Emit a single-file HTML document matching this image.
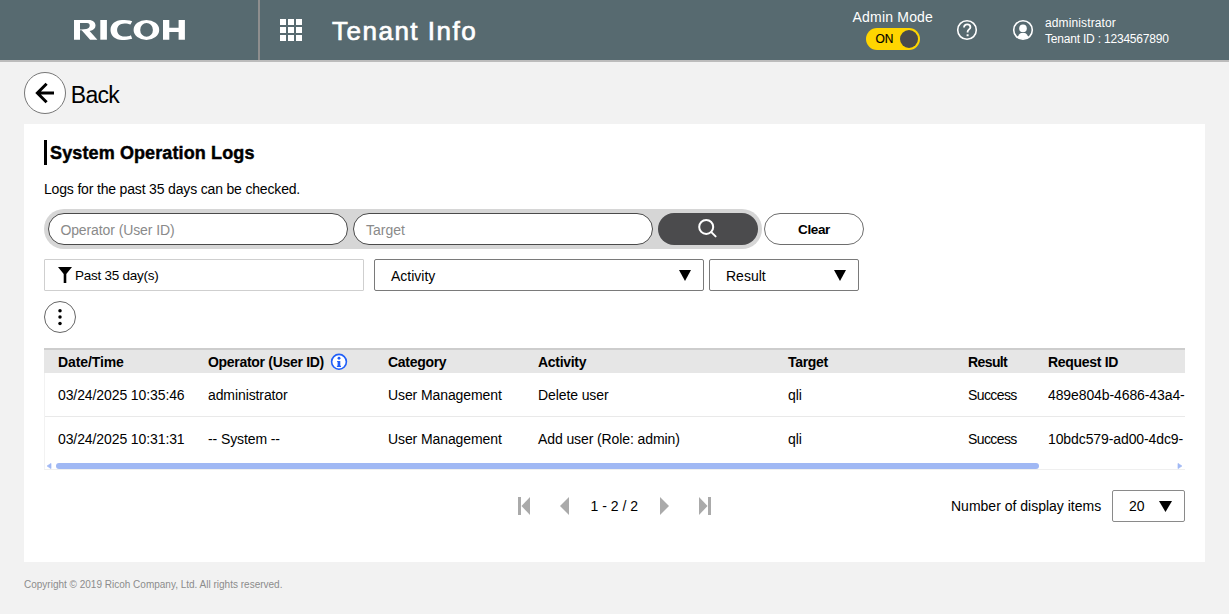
<!DOCTYPE html>
<html><head><meta charset="utf-8">
<style>
*{box-sizing:border-box;margin:0;padding:0}
html,body{width:1229px;height:614px;overflow:hidden;background:#f2f2f2;font-family:"Liberation Sans",sans-serif;color:#000}
.a{position:absolute;white-space:nowrap;line-height:1}
#hdr{position:absolute;left:0;top:0;width:1229px;height:60px;background:#576a70}
#hdrb{position:absolute;left:0;top:60px;width:1229px;height:2px;background:#bcbcbc}
#vline{position:absolute;left:258px;top:0;width:2px;height:60px;background:#8e8e8e}
.w{color:#fff}
.b{font-size:14px;font-weight:bold;letter-spacing:-0.3px}
.r{font-size:14px;letter-spacing:-0.1px}
#panel{position:absolute;left:24px;top:124px;width:1181px;height:438px;background:#fff}
</style></head><body>
<div id="hdr"></div>
<div id="hdrb"></div>
<div id="vline"></div>
<svg class="a" style="left:0;top:0" width="320" height="60" viewBox="0 0 320 60">
 <g fill="#fff">
  <path fill-rule="evenodd" d="M74,20 H88.5 C93.3,20 95.5,22.5 95.5,25.6 C95.5,28.4 93.5,30.4 89.6,31.1 L97.4,39.7 H90.1 L81.7,30.3 H80 V39.7 H74 Z M80,23 H87 C89,23 89.7,24.1 89.7,25.6 C89.7,27.4 88.6,28.6 86.3,29 L81.5,29.4 H80 Z"/>
  <rect x="100.3" y="20" width="6.6" height="19.7"/>
  <path d="M132.2,21.2 C129,20.2 125.5,20 122,20 C115.5,20 110.5,24.2 110.5,29.95 C110.5,35.7 115.5,39.9 122,39.9 C125.5,39.9 129,39.7 132.2,38.7 L130.9,35.2 C129,36.2 127,36.5 124.5,36.5 C120,36.5 117.1,33.7 117.1,29.95 C117.1,26.2 120,23.4 124.5,23.4 C127,23.4 129,23.7 130.5,24.6 Z"/>
  <path fill-rule="evenodd" d="M133.6,29.9 A12.8,10 0 1 0 159.2,29.9 A12.8,10 0 1 0 133.6,29.9 Z M140.2,29.9 A6.35,6.8 0 1 0 152.9,29.9 A6.35,6.8 0 1 0 140.2,29.9 Z"/>
  <path d="M163,20.1 H169.3 V27.7 H178.6 V20.1 H184.9 V39.7 H178.6 V31.9 H169.3 V39.7 H163 Z"/>
  <rect x="280" y="19" width="6" height="6"/><rect x="288" y="19" width="6" height="6"/><rect x="296" y="19" width="6" height="6"/>
  <rect x="280" y="27" width="6" height="6"/><rect x="288" y="27" width="6" height="6"/><rect x="296" y="27" width="6" height="6"/>
  <rect x="280" y="35" width="6" height="6"/><rect x="288" y="35" width="6" height="6"/><rect x="296" y="35" width="6" height="6"/>
 </g>
</svg>
<div class="a w" style="left:332px;top:18.4px;font-size:26px;letter-spacing:1.5px;-webkit-text-stroke:0.7px #fff">Tenant Info</div>
<div class="a w" style="left:852.5px;top:9.9px;font-size:14px;letter-spacing:0.2px">Admin Mode</div>
<div class="a" style="left:866px;top:28px;width:54px;height:22px;border-radius:11px;background:#ffd500"></div>
<div class="a" style="left:900px;top:30px;width:18px;height:18px;border-radius:9px;background:#4a4a4c"></div>
<div class="a" style="left:875.5px;top:33px;font-size:12px;letter-spacing:-0.2px;-webkit-text-stroke:0.15px #000">ON</div>
<svg class="a" style="left:955px;top:18px" width="24" height="24" viewBox="0 0 24 24">
 <circle cx="12" cy="12" r="9.3" fill="none" stroke="#fff" stroke-width="1.6"/>
 <path d="M9,9.4 C9,7.6 10.3,6.4 12.2,6.4 C14.1,6.4 15.4,7.6 15.4,9.2 C15.4,11.3 12.6,11.6 12.6,13.8 V14.6" fill="none" stroke="#fff" stroke-width="1.8"/>
 <rect x="11.6" y="16.3" width="2" height="1.9" fill="#fff"/>
</svg>
<svg class="a" style="left:1011px;top:18px" width="24" height="24" viewBox="0 0 24 24">
 <circle cx="12" cy="12" r="9.3" fill="none" stroke="#fff" stroke-width="1.6"/>
 <circle cx="12" cy="10.4" r="3.8" fill="#fff"/>
 <path d="M6.42,19.06 L8.3,16.2 C8.9,15.3 9.9,14.9 11,14.9 H13 C14.1,14.9 15.1,15.3 15.7,16.2 L17.58,19.06 A9,9 0 0 1 6.42,19.06 Z" fill="#fff"/>
</svg>
<div class="a w" style="left:1045px;top:17.2px;font-size:12px;letter-spacing:0.12px">administrator</div>
<div class="a w" style="left:1045px;top:32.9px;font-size:12px;letter-spacing:-0.2px">Tenant ID : 1234567890</div>

<!-- Back -->
<svg class="a" style="left:23px;top:71px" width="44" height="44" viewBox="0 0 44 44">
 <circle cx="22" cy="22" r="20.5" fill="#fff" stroke="#777" stroke-width="1"/>
 <path d="M23.6,12.8 L14.4,22 L23.6,31.2 M15,22 H31" fill="none" stroke="#000" stroke-width="3"/>
</svg>
<div class="a" style="left:70.8px;top:83.5px;font-size:23px;letter-spacing:-0.7px">Back</div>

<div id="panel"></div>

<!-- Title -->
<div class="a" style="left:44px;top:140px;width:3px;height:25px;background:#000"></div>
<div class="a" style="left:50px;top:143.8px;font-size:18px;font-weight:bold;letter-spacing:0.12px;-webkit-text-stroke:0.45px #000">System Operation Logs</div>
<div class="a" style="left:44px;top:182px;font-size:14px;letter-spacing:-0.17px">Logs for the past 35 days can be checked.</div>

<!-- Search bar -->
<div class="a" style="left:44px;top:209px;width:718px;height:40px;border-radius:20px;background:#d6d6d6"></div>
<div class="a" style="left:48px;top:213px;width:300px;height:32px;border-radius:16px;background:#fff;border:1px solid #4a4a4a"></div>
<div class="a" style="left:353px;top:213px;width:300px;height:32px;border-radius:16px;background:#fff;border:1px solid #4a4a4a"></div>
<div class="a" style="left:60.4px;top:223.3px;font-size:14px;letter-spacing:-0.1px;color:#8a8a8a">Operator (User ID)</div>
<div class="a" style="left:366px;top:223.3px;font-size:14px;color:#8a8a8a">Target</div>
<div class="a" style="left:658px;top:213px;width:100px;height:32px;border-radius:16px;background:#4b4b4d"></div>
<svg class="a" style="left:694px;top:216.3px" width="26" height="26" viewBox="0 0 26 26">
 <circle cx="12.2" cy="10.9" r="7" fill="none" stroke="#fff" stroke-width="2"/>
 <path d="M17.3,16.1 L21.6,20.4" stroke="#fff" stroke-width="2" stroke-linecap="round"/>
</svg>
<div class="a" style="left:764px;top:213px;width:100px;height:32px;border-radius:16px;background:#fff;border:1px solid #6e6e6e"></div>
<div class="a" style="left:798px;top:222.8px;font-size:13.5px;font-weight:bold;letter-spacing:-0.35px">Clear</div>

<!-- Filters -->
<div class="a" style="left:44px;top:259px;width:320px;height:32px;border:1px solid #cfcfcf;border-radius:1px;background:#fff"></div>
<svg class="a" style="left:58px;top:267px" width="14" height="16" viewBox="0 0 14 16">
 <path d="M0,0 H14 L8.3,7 V16 H5.7 V7 Z" fill="#000"/>
</svg>
<div class="a" style="left:75px;top:269px;font-size:13.5px;letter-spacing:-0.25px">Past 35 day(s)</div>
<div class="a" style="left:374px;top:259px;width:330px;height:32px;border:1px solid #7a7a7a;border-radius:2px;background:#fff"></div>
<div class="a" style="left:391px;top:269px;font-size:14px">Activity</div>
<svg class="a" style="left:679px;top:270px" width="12" height="11" viewBox="0 0 12 11"><path d="M0,0 H12 L6,11 Z" fill="#000"/></svg>
<div class="a" style="left:709px;top:259px;width:150px;height:32px;border:1px solid #7a7a7a;border-radius:2px;background:#fff"></div>
<div class="a" style="left:726px;top:269px;font-size:14px">Result</div>
<svg class="a" style="left:834px;top:270px" width="12" height="11" viewBox="0 0 12 11"><path d="M0,0 H12 L6,11 Z" fill="#000"/></svg>

<!-- kebab -->
<svg class="a" style="left:43px;top:300px" width="34" height="34" viewBox="0 0 34 34">
 <circle cx="17" cy="17" r="15.5" fill="#fff" stroke="#666" stroke-width="1"/>
 <circle cx="17" cy="10.7" r="1.75" fill="#000"/><circle cx="17" cy="17" r="1.75" fill="#000"/><circle cx="17" cy="23.4" r="1.75" fill="#000"/>
</svg>

<!-- Table -->
<div class="a" style="left:44px;top:348px;width:1141px;height:122px;border-left:1px solid #f2f2f2;border-bottom:1px solid #efefef;overflow:hidden">
</div>
<div class="a" style="left:44px;top:348px;width:1141px;height:2px;background:#cdcdcd"></div>
<div class="a" style="left:44px;top:350px;width:1141px;height:23px;background:#e6e6e6"></div>
<div class="a" style="left:45px;top:416px;width:1140px;height:1px;background:#e9e9e9"></div>
<div id="tbl">
<div class="a b" style="left:58px;top:354.8px;letter-spacing:-0.1px">Date/Time</div>
<div class="a b" style="left:208px;top:354.8px">Operator (User ID)</div>
<div class="a b" style="left:388px;top:354.8px">Category</div>
<div class="a b" style="left:538px;top:354.8px">Activity</div>
<div class="a b" style="left:788px;top:354.8px">Target</div>
<div class="a b" style="left:968px;top:354.8px;letter-spacing:-0.6px">Result</div>
<div class="a b" style="left:1048px;top:354.8px">Request ID</div>
<svg class="a" style="left:330px;top:353px" width="18" height="18" viewBox="0 0 18 18">
 <circle cx="9" cy="8.8" r="7.4" fill="#fff" stroke="#1f5ef8" stroke-width="1.6"/>
 <circle cx="9" cy="5.3" r="1.45" fill="#1f5ef8"/>
 <path d="M7.1,7.9 H10.3 V12.8 H11 V13.9 H6.9 V12.8 H7.6 V8.9 H7.1 Z" fill="#1f5ef8"/>
</svg>
<div class="a r" style="left:58px;top:387.8px">03/24/2025 10:35:46</div>
<div class="a r" style="left:208px;top:387.8px">administrator</div>
<div class="a r" style="left:388px;top:387.8px">User Management</div>
<div class="a r" style="left:538px;top:387.8px">Delete user</div>
<div class="a r" style="left:788px;top:387.8px">qli</div>
<div class="a r" style="left:968px;top:387.8px;letter-spacing:-0.6px">Success</div>
<div class="a r" style="left:1048px;top:387.8px;width:137px;overflow:hidden">489e804b-4686-43a4-</div>
<div class="a r" style="left:58px;top:432px">03/24/2025 10:31:31</div>
<div class="a r" style="left:208px;top:432px">-- System --</div>
<div class="a r" style="left:388px;top:432px">User Management</div>
<div class="a r" style="left:538px;top:432px">Add user (Role: admin)</div>
<div class="a r" style="left:788px;top:432px">qli</div>
<div class="a r" style="left:968px;top:432px;letter-spacing:-0.6px">Success</div>
<div class="a r" style="left:1048px;top:432px;width:137px;overflow:hidden">10bdc579-ad00-4dc9-</div>
</div>
<!-- scrollbar -->
<div class="a" style="left:56px;top:463px;width:983px;height:6px;border-radius:3px;background:#a0b8f4"></div>
<svg class="a" style="left:46px;top:463px" width="6" height="6" viewBox="0 0 6 6"><path d="M5,0.4 V5.6 L1.1,3 Z" fill="#a0b8f4" stroke="#a0b8f4" stroke-width="0.7" stroke-linejoin="round"/></svg>
<svg class="a" style="left:1177px;top:463px" width="6" height="6" viewBox="0 0 6 6"><path d="M1,0.4 V5.6 L4.9,3 Z" fill="#a0b8f4" stroke="#a0b8f4" stroke-width="0.7" stroke-linejoin="round"/></svg>

<!-- pagination -->
<svg class="a" style="left:515px;top:495px" width="200" height="22" viewBox="515 495 200 22">
 <g fill="#aaa">
  <rect x="518" y="497" width="3" height="18"/><path d="M530,497 V515 L521.5,506 Z"/>
  <path d="M569,497 V515 L560,506 Z"/>
  <path d="M660,497 V515 L669,506 Z"/>
  <path d="M699,497 V515 L707.5,506 Z"/><rect x="708" y="497" width="3" height="18"/>
 </g>
</svg>
<div class="a" style="left:590.5px;top:499.1px;font-size:14px">1 - 2 / 2</div>
<div class="a" style="left:951px;top:499.4px;font-size:14px">Number of display items</div>
<div class="a" style="left:1112px;top:490px;width:73px;height:32px;border:1px solid #8a8a8a;border-radius:2px;background:#fff"></div>
<div class="a" style="left:1129px;top:499.4px;font-size:14px">20</div>
<svg class="a" style="left:1159px;top:501px" width="13" height="11" viewBox="0 0 13 11"><path d="M0,0 H13 L6.5,11 Z" fill="#000"/></svg>

<!-- footer -->
<div class="a" style="left:24px;top:579.5px;font-size:10px;color:#8c8c8c">Copyright © 2019 Ricoh Company, Ltd. All rights reserved.</div>
</body></html>
